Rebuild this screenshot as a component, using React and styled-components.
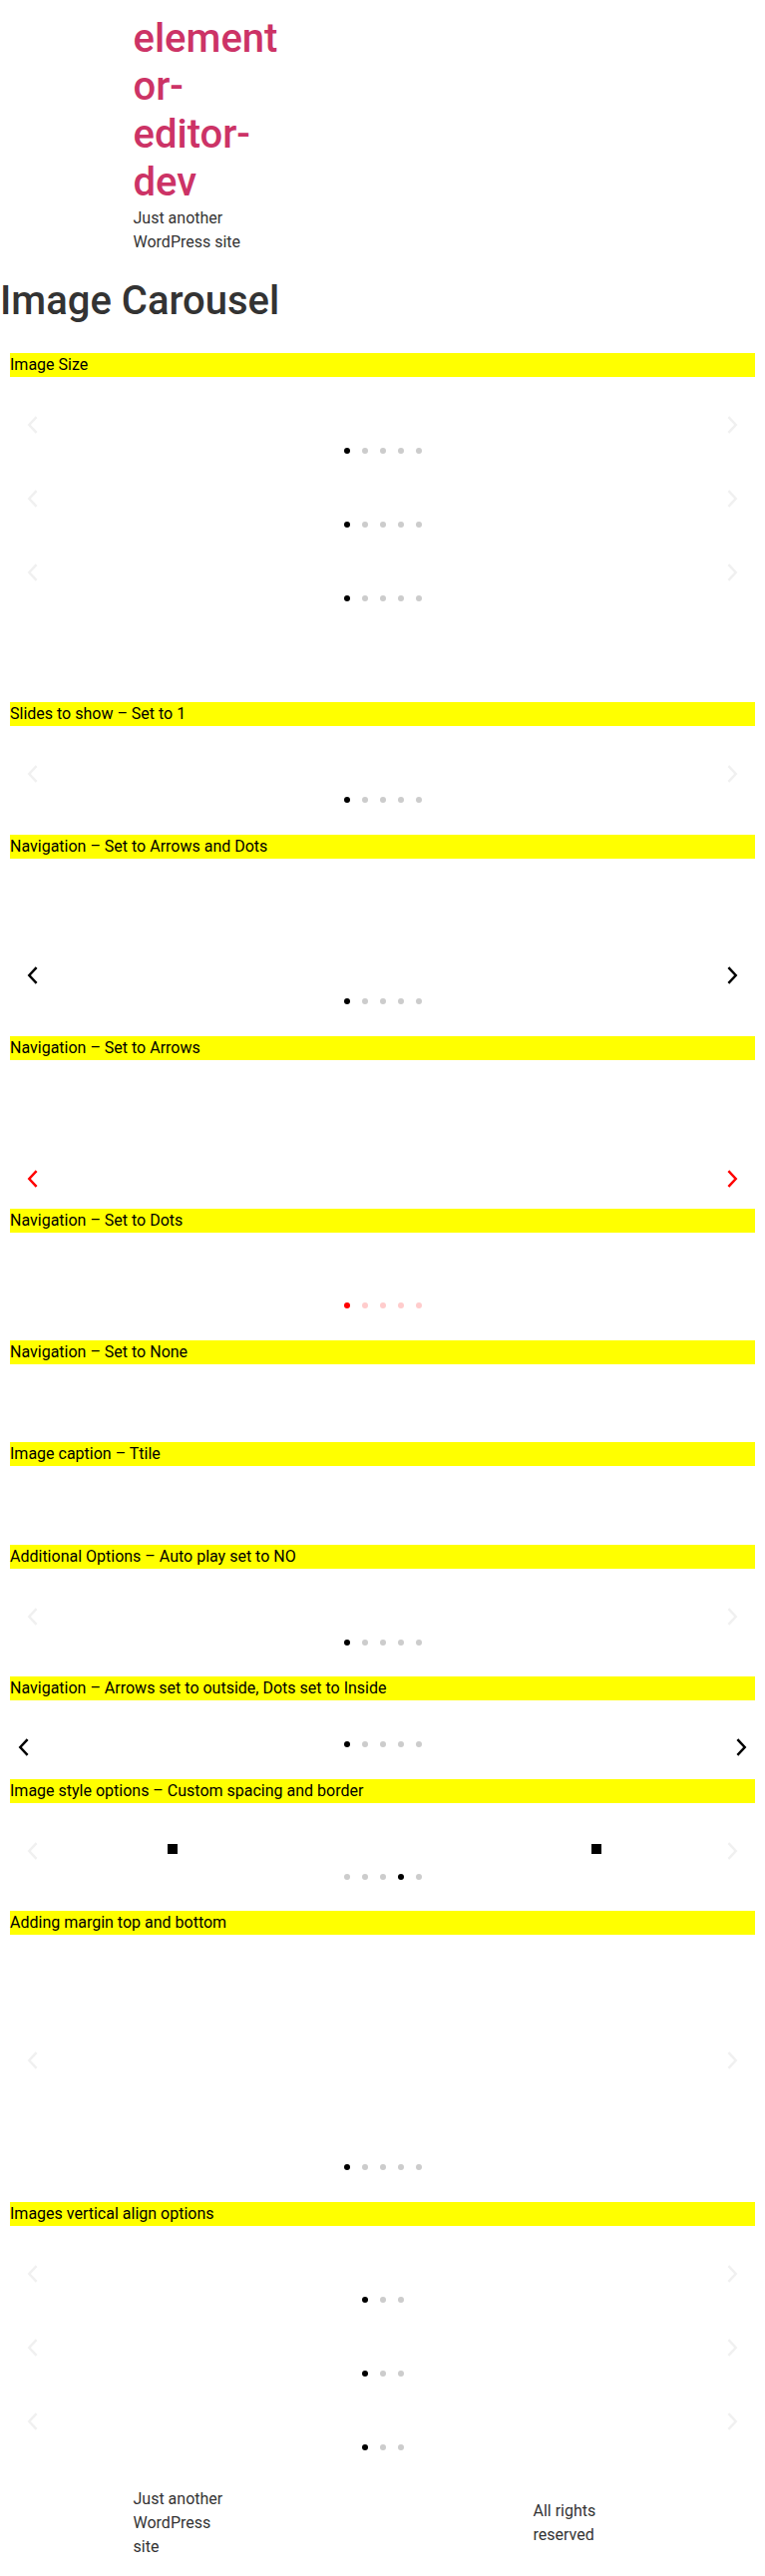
import React from 'react';
import styled, { createGlobalStyle, css } from 'styled-components';

const GlobalStyle = createGlobalStyle`
  *, *::before, *::after { box-sizing: border-box; }
  html, body { margin: 0; padding: 0; background: #fff; }
  body {
    font-family: Roboto, "Liberation Sans", Arial, sans-serif;
    font-size: 16px;
    line-height: 1.5;
    color: #333;
  }
`;

const Page = styled.div`
  width: 100%;
`;

/* ---------- header ---------- */
const Header = styled.header`
  padding: 15px 0;
`;

const Inner = styled.div`
  max-width: 500px;
  margin: 0 auto;
`;

const Branding = styled.div`
  width: 150px;
`;

const SiteTitle = styled.a`
  display: block;
  font-size: 40px;
  line-height: 48px;
  font-weight: 500;
  color: #c36;
  text-decoration: none;
  overflow-wrap: break-word;
`;

const SiteDescription = styled.p`
  margin: 0;
  font-size: 16px;
  line-height: 24px;
  color: #333;
`;

/* ---------- main ---------- */
const Main = styled.main`
  padding-bottom: 18px;
`;

const PageTitle = styled.h1`
  margin: 8px 0 28px;
  font-size: 40px;
  line-height: 48px;
  font-weight: 500;
  color: #333;
`;

const Content = styled.div`
  padding: 0 10px;
`;

const Section = styled.section``;

const Bar = styled.div`
  background: #ff0;
  color: #000;
  font-size: 16px;
  line-height: 24px;
`;

const Body = styled.div`
  display: flex;
  flex-direction: column;
  gap: 9px;
  padding: ${(p) => p.$pt}px 0 ${(p) => p.$pb}px;
`;

/* ---------- carousel ---------- */
const CarouselWrap = styled.div`
  position: relative;
`;

const Track = styled.div`
  height: ${(p) => p.$height}px;
  overflow: hidden;
`;

const SlideRow = styled.div`
  display: grid;
  grid-template-columns: 326px 326px;
  column-gap: 99px;
  align-items: center;
  height: 100%;
  padding-top: 9px;
`;

const ImageFrame = styled.span`
  justify-self: center;
  display: block;
  width: 0;
  height: 0;
  border: 5px solid #000;
`;

const Pagination = styled.div`
  display: flex;
  justify-content: center;
  align-items: center;
  height: 12px;
  ${(p) =>
    p.$inside &&
    css`
      position: absolute;
      left: 0;
      right: 0;
      bottom: 10px;
      height: 6px;
    `}
`;

const dotColors = {
  dark: { on: '#000', off: '#cccccc' },
  red: { on: '#ff0000', off: '#ffcccc' },
};

const Dot = styled.span`
  width: 6px;
  height: 6px;
  margin: 0 6px;
  border-radius: 50%;
  background: ${(p) => (p.$active ? dotColors[p.$tone].on : dotColors[p.$tone].off)};
`;

const arrowColors = {
  light: 'rgba(238, 238, 238, 0.9)',
  dark: '#000',
  red: '#ff0000',
};

const Arrow = styled.div`
  position: absolute;
  top: 50%;
  transform: translateY(-50%);
  ${(p) => (p.$side === 'left' ? 'left' : 'right')}: ${(p) => p.$inset}px;
  width: 11px;
  height: 18px;
  display: flex;
  color: ${(p) => arrowColors[p.$tone]};

  svg {
    width: 11px;
    height: 18px;
    display: block;
  }
`;

const Chevron = ({ dir }) => (
  <svg viewBox="0 0 11 18" fill="none" stroke="currentColor" strokeWidth="2.5" strokeLinejoin="miter">
    {dir === 'left' ? <path d="M9.6 1.2 L2.3 9 L9.6 16.8" /> : <path d="M1.4 1.2 L8.7 9 L1.4 16.8" />}
  </svg>
);

const Carousel = ({
  arrows = 'light',
  dots = 'dark',
  count = 5,
  active = 0,
  trackHeight = 53,
  squares = false,
  outside = false,
}) => {
  const inset = outside ? 8 : 17;
  return (
    <CarouselWrap>
      <Track $height={outside ? 20 : trackHeight}>
        {squares && (
          <SlideRow>
            <ImageFrame />
            <ImageFrame />
          </SlideRow>
        )}
      </Track>
      {dots && (
        <Pagination $inside={outside}>
          {Array.from({ length: count }).map((_, i) => (
            <Dot key={i} $active={i === active} $tone={dots} />
          ))}
        </Pagination>
      )}
      {arrows && (
        <>
          <Arrow $side="left" $inset={inset} $tone={arrows}>
            <Chevron dir="left" />
          </Arrow>
          <Arrow $side="right" $inset={inset} $tone={arrows}>
            <Chevron dir="right" />
          </Arrow>
        </>
      )}
    </CarouselWrap>
  );
};

/* ---------- footer ---------- */
const Footer = styled.footer`
  padding: 16px 0;
`;

const FooterInner = styled.div`
  max-width: 500px;
  margin: 0 auto;
  display: flex;
  justify-content: space-between;
  align-items: center;
`;

const FooterCol = styled.p`
  margin: 0;
  width: ${(p) => p.$width}px;
  font-size: 16px;
  line-height: 24px;
  color: #333;
`;

const sections = [
  { title: 'Image Size', pt: 15, pb: 98, carousels: [{}, {}, {}] },
  { title: 'Slides to show – Set to 1', pt: 15, pb: 29, carousels: [{}] },
  { title: 'Navigation – Set to Arrows and Dots', pt: 84, pb: 29, carousels: [{ arrows: 'dark' }] },
  { title: 'Navigation – Set to Arrows', pt: 92, pb: 4, carousels: [{ arrows: 'red', dots: false }] },
  { title: 'Navigation – Set to Dots', pt: 14, pb: 29, carousels: [{ arrows: false, dots: 'red' }] },
  { title: 'Navigation – Set to None', pt: 78, pb: 0, carousels: [] },
  { title: 'Image caption – Ttile', pt: 79, pb: 0, carousels: [] },
  { title: 'Additional Options – Auto play set to NO', pt: 15, pb: 28, carousels: [{}] },
  {
    title: 'Navigation – Arrows set to outside, Dots set to Inside',
    pt: 37,
    pb: 22,
    carousels: [{ arrows: 'dark', outside: true }],
  },
  {
    title: 'Image style options – Custom spacing and border',
    pt: 15,
    pb: 28,
    carousels: [{ squares: true, active: 3 }],
  },
  { title: 'Adding margin top and bottom', pt: 13, pb: 29, carousels: [{ trackHeight: 214 }] },
  {
    title: 'Images vertical align options',
    pt: 15,
    pb: 0,
    carousels: [{ count: 3 }, { count: 3 }, { count: 3 }],
  },
];

export default function App() {
  return (
    <Page>
      <GlobalStyle />
      <Header>
        <Inner>
          <Branding>
            <SiteTitle href="#">elementor-editor-dev</SiteTitle>
            <SiteDescription>Just another WordPress site</SiteDescription>
          </Branding>
        </Inner>
      </Header>
      <Main>
        <PageTitle>Image Carousel</PageTitle>
        <Content>
          {sections.map((s) => (
            <Section key={s.title}>
              <Bar>{s.title}</Bar>
              <Body $pt={s.pt} $pb={s.pb}>
                {s.carousels.map((c, i) => (
                  <Carousel key={i} {...c} />
                ))}
              </Body>
            </Section>
          ))}
        </Content>
      </Main>
      <Footer>
        <FooterInner>
          <FooterCol $width={96}>Just another WordPress site</FooterCol>
          <FooterCol $width={99}>All rights reserved</FooterCol>
        </FooterInner>
      </Footer>
    </Page>
  );
}
